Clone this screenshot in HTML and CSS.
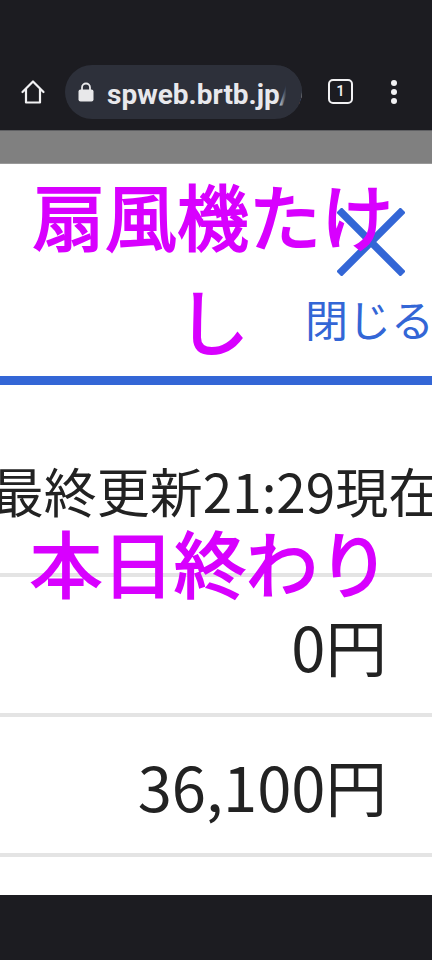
FILE: index.html
```html
<!DOCTYPE html>
<html lang="ja">
<head>
<meta charset="utf-8">
<title>扇風機たけし</title>
<link rel="stylesheet" href="styles.css">
</head>
<body>
<div class="status"></div>
<div class="toolbar">
  <svg class="home" viewBox="0 0 26 26" width="26" height="26"><path d="M2.500 13 13 2.500 23.500 13M6 10v13.500h14V10" fill="none" stroke="#f1f1f3" stroke-width="2.200" stroke-linejoin="round" stroke-linecap="round"/></svg>
  <div class="url">
    <svg class="lock" viewBox="0 0 16 20" width="16" height="20"><path d="M4 8V5.500a4 4 0 0 1 8 0V8" fill="none" stroke="#e8e8ea" stroke-width="1.800"/><rect x="0.500" y="7.500" width="15" height="12" rx="2" fill="#e8e8ea"/></svg>
    <span class="host">spweb.brtb.jp/top</span>
  </div>
  <div class="tabs">1</div>
  <div class="menu"><i></i><i></i><i></i></div>
</div>
<div class="dim"></div>
<main class="page">
  <header class="head">
    <h1 class="title">扇風機たけし</h1>
    <div class="close">
      <svg viewBox="0 0 68 68" width="68" height="68"><path d="M2 2 66 66M66 2 2 66" stroke="#3366d6" stroke-width="7.500" fill="none"/></svg>
      <span class="close-label">閉じる</span>
    </div>
  </header>
  <p class="updated">最終更新21:29現在</p>
  <p class="ended">本日終わり</p>
  <div class="row first">0円</div>
  <div class="row">36,100円</div>
</main>
<div class="navbar"></div>
</body>
</html>
```

FILE: styles.css
```css
* { box-sizing: border-box; }
html, body { margin: 0; padding: 0; }
body {
  width: 432px;
  height: 960px;
  overflow: hidden;
  background: #1c1c21;
  font-family: "Noto Sans CJK JP", "Noto Sans", sans-serif;
  display: flex;
  flex-direction: column;
}
.status { height: 54px; flex: none; background: #1c1c21; }
.toolbar {
  height: 77px;
  flex: none;
  display: flex;
  align-items: center;
  padding: 0 0 1px 20px;
  background: #1c1c21;
  border-bottom: 1px solid #5f6063;
}
.home { flex: none; }
.url {
  position: relative;
  width: 237px;
  height: 54px;
  margin-left: 19px;
  border-radius: 27px;
  background: #2d303a;
  display: flex;
  align-items: center;
  padding-left: 13px;
  overflow: hidden;
  flex: none;
}
.url::after {
  content: "";
  position: absolute;
  top: 0;
  right: 0;
  bottom: 0;
  width: 24px;
  background: linear-gradient(to right, rgba(45, 48, 58, 0) 0, #2d303a 35%);
}
.lock { flex: none; }
.host {
  margin-left: 13px;
  padding-top: 6px;
  font: 700 28px/1 Roboto, sans-serif;
  color: #e8e8ec;
  white-space: nowrap;
}
.tabs {
  flex: none;
  width: 25px;
  height: 25px;
  margin-left: 26px;
  border: 2.500px solid #f1f1f3;
  border-radius: 5px;
  color: #f1f1f3;
  font: 500 15px/20px Roboto, sans-serif;
  text-align: center;
}
.menu {
  flex: none;
  margin-left: 38px;
  display: flex;
  flex-direction: column;
  gap: 3px;
}
.menu i {
  display: block;
  width: 6px;
  height: 6px;
  border-radius: 50%;
  background: #f1f1f3;
}
.dim { height: 33px; flex: none; background: #808080; border-bottom: 1px solid #999; }
.page { flex: 1; background: #fff; overflow: hidden; }
.head {
  display: flow-root;
  position: relative;
  height: 221px;
  border-bottom: 9px solid #3366d6;
}
.title {
  position: relative;
  z-index: 1;
  margin: -3px 0 0;
  padding: 0 26px 0 20px;
  font-size: 72px;
  font-weight: 400;
  -webkit-text-stroke: 2px #d800ff;
  line-height: 105px;
  color: #d800ff;
  text-align: center;
  word-break: break-all;
}
.close {
  position: absolute;
  top: 44px;
  left: 305px;
  width: 127px;
  display: flex;
  flex-direction: column;
  align-items: flex-start;
}
.close svg { margin-left: 32px; }
.close-label {
  margin-top: 12px;
  font-size: 43px;
  font-weight: 400;
  line-height: 60px;
  color: #3366d6;
  white-space: nowrap;
}
.updated {
  margin: 70px 0 0;
  height: 72px;
  font-size: 53px;
  font-weight: 400;
  line-height: 70px;
  color: #222;
  white-space: nowrap;
  display: flex;
  justify-content: center;
}
.ended {
  position: relative;
  z-index: 1;
  margin: 2px 0 0;
  height: 44px;
  padding-left: 30px;
  font-size: 72px;
  font-weight: 400;
  -webkit-text-stroke: 2px #d800ff;
  line-height: 64px;
  color: #d800ff;
  white-space: nowrap;
}
.row {
  height: 140px;
  padding: 0 45px 0 0;
  font-size: 61.500px;
  line-height: 138px;
  color: #222;
  text-align: right;
  border-bottom: 4px solid #e4e4e4;
}
.row.first { border-top: 4px solid #e4e4e4; height: 144px; }
.navbar { height: 65px; flex: none; background: #1c1c21; }
```
